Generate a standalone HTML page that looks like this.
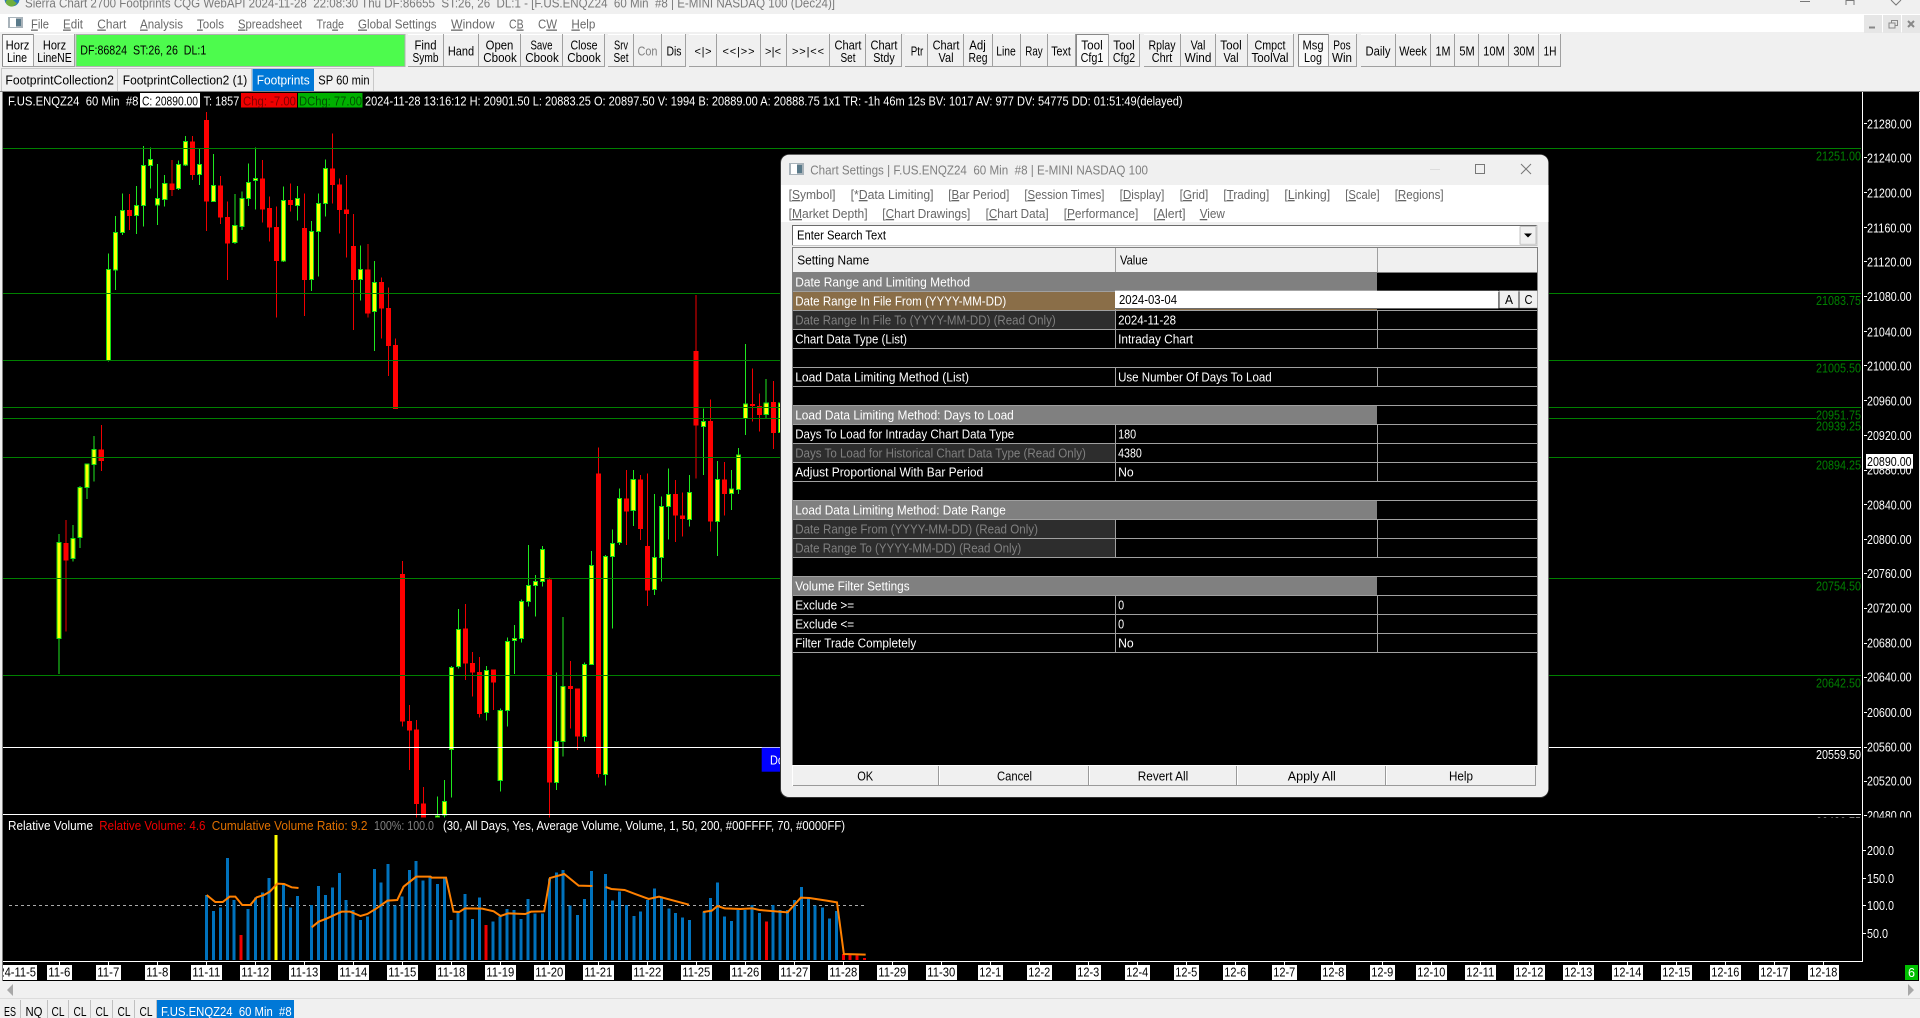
<!DOCTYPE html>
<html><head><meta charset="utf-8"><title>Sierra Chart</title>
<style>
html,body{margin:0;padding:0;background:#f0f0f0;width:1920px;height:1018px;overflow:hidden}
svg{display:block}
text{white-space:pre;font-family:"Liberation Sans",Arial,sans-serif;font-size:13px}
.n{vector-effect:non-scaling-stroke}
.s{font-size:11px}
</style></head><body>
<svg xmlns="http://www.w3.org/2000/svg" width="1920" height="1018" viewBox="0 0 1920 1018">
<defs>
<clipPath id="c1"><rect x="3" y="92" width="1859" height="725.5"/></clipPath>
<clipPath id="c2"><rect x="1864" y="92" width="54" height="725.5"/></clipPath>
<clipPath id="c3"><rect x="3" y="965" width="34" height="15"/></clipPath>
<clipPath id="c4"><rect x="0" y="0" width="1920" height="14"/></clipPath>
<clipPath id="c5"><rect x="1816" y="780" width="46" height="37.5"/></clipPath>
</defs>
<rect width="1920" height="1018" fill="#f0f0f0"/>

<!-- title bar -->
<g clip-path="url(#c4)">
<circle cx="12" cy="-1" r="7.5" fill="#2a78b8"/><path d="M6 1q4 -4 7 -1t4 3q-4 5 -8 3t-3 -5z" fill="#6fae3c"/>
<text x="25" y="7.5" fill="#7a7a7a" textLength="810" lengthAdjust="spacingAndGlyphs">Sierra Chart 2700 Footprints CQG WebAPI 2024-11-28  22:08:30 Thu DF:86655  ST:26, 26  DL:1 - [F.US.ENQZ24  60 Min  #8 | E-MINI NASDAQ 100 (Dec24)]</text>
<path d="M1800 1.5h10M1846 5V.5h8V5M1891 0l5 5 5-5" stroke="#777" fill="none"/>
</g>

<!-- menu -->
<rect x="0" y="14" width="1920" height="18" fill="#fff"/>
<rect x="8" y="17" width="15" height="11" fill="#a9b3ba"/><rect x="10" y="18" width="6" height="9" fill="#fff"/><rect x="16" y="19" width="5" height="7" fill="#5a7a8a"/>
<g fill="#6a6a6a">
<text x="31" y="28.5" textLength="18" lengthAdjust="spacingAndGlyphs"><tspan text-decoration="underline">F</tspan>ile</text>
<text x="63" y="28.5" textLength="20" lengthAdjust="spacingAndGlyphs"><tspan text-decoration="underline">E</tspan>dit</text>
<text x="97.3" y="28.5" textLength="29" lengthAdjust="spacingAndGlyphs"><tspan text-decoration="underline">C</tspan>hart</text>
<text x="140" y="28.5" textLength="43" lengthAdjust="spacingAndGlyphs"><tspan text-decoration="underline">A</tspan>nalysis</text>
<text x="197" y="28.5" textLength="27" lengthAdjust="spacingAndGlyphs"><tspan text-decoration="underline">T</tspan>ools</text>
<text x="238" y="28.5" textLength="64" lengthAdjust="spacingAndGlyphs"><tspan text-decoration="underline">S</tspan>preadsheet</text>
<text x="316.5" y="28.5" textLength="27.5" lengthAdjust="spacingAndGlyphs">Tra<tspan text-decoration="underline">d</tspan>e</text>
<text x="358" y="28.5" textLength="78.6" lengthAdjust="spacingAndGlyphs"><tspan text-decoration="underline">G</tspan>lobal Settings</text>
<text x="451" y="28.5" textLength="43.6" lengthAdjust="spacingAndGlyphs"><tspan text-decoration="underline">W</tspan>indow</text>
<text x="509" y="28.5" textLength="14.6" lengthAdjust="spacingAndGlyphs">C<tspan text-decoration="underline">B</tspan></text>
<text x="538" y="28.5" textLength="19" lengthAdjust="spacingAndGlyphs">C<tspan text-decoration="underline">W</tspan></text>
<text x="571.4" y="28.5" textLength="24" lengthAdjust="spacingAndGlyphs"><tspan text-decoration="underline">H</tspan>elp</text>
</g>
<rect x="1864" y="15" width="18" height="18" fill="#e6e6e6"/><rect x="1883" y="15" width="18" height="18" fill="#e6e6e6"/><rect x="1902" y="15" width="18" height="18" fill="#e6e6e6"/>
<path d="M1869 27.5h6" stroke="#888" stroke-width="2"/>
<path d="M1889 23h6v5h-6zM1891.500 23v-2.500h6v5h-2.500" stroke="#888" fill="none"/>
<path d="M1908 21l6 6m0-6l-6 6" stroke="#888" stroke-width="2"/>

<!-- toolbar -->
<rect x="2" y="34" width="31" height="33" fill="#f9f9f9"/>
<rect x="1076" y="34" width="32" height="33" fill="#f9f9f9"/>
<rect x="1298" y="34" width="30" height="33" fill="#f9f9f9"/>
<rect x="76" y="34.500" width="329" height="32" fill="#4dfb4d" stroke="#b0b0b0"/>
<path d="M2 34.500H74M408 34.500H604M608 34.500H685M689 34.500H901M905 34.500H1139M1144 34.500H1293M1298 34.500H1356M1361 34.500H1560" stroke="#fff"/>
<path d="M2.500 34V67M1076.500 34V67M2 34.500H33M1076 34.500H1108M1298.500 34V67M1298 34.500H1328" stroke="#888"/>
<path d="M2 66.500H74M408 66.500H604M608 66.500H685M689 66.500H901M905 66.500H1139M1144 66.500H1293M1298 66.500H1356M1361 66.500H1560M33.500 34V67M74.500 34V67M443.500 34V67M478.500 34V67M520.500 34V67M562.500 34V67M604.500 34V67M633.500 34V67M661.500 34V67M685.500 34V67M716.500 34V67M760.500 34V67M786.500 34V67M829.500 34V67M865.500 34V67M901.500 34V67M927.500 34V67M963.500 34V67M992.500 34V67M1020.500 34V67M1047.500 34V67M1075.500 34V67M1108.500 34V67M1139.500 34V67M1180.500 34V67M1215.500 34V67M1247.500 34V67M1293.500 34V67M1328.500 34V67M1356.500 34V67M1395.500 34V67M1430.500 34V67M1454.500 34V67M1478.500 34V67M1508.500 34V67M1538.500 34V67M1560.500 34V67" stroke="#a0a0a0" fill="none"/>
<g fill="#000" text-anchor="middle">
<text x="17.500" y="49.500" textLength="23.700" lengthAdjust="spacingAndGlyphs">Horz</text><text x="17" y="62" textLength="20" lengthAdjust="spacingAndGlyphs">Line</text>
<text x="54.500" y="49.500" textLength="23.200" lengthAdjust="spacingAndGlyphs">Horz</text><text x="54.500" y="62" textLength="34.400" lengthAdjust="spacingAndGlyphs">LineNE</text>
<text x="143.300" y="54.500" textLength="126" lengthAdjust="spacingAndGlyphs">DF:86824  ST:26, 26  DL:1</text>
<text x="425.500" y="49.500" textLength="22" lengthAdjust="spacingAndGlyphs">Find</text><text x="425.500" y="62" textLength="26" lengthAdjust="spacingAndGlyphs">Symb</text>
<text x="461" y="55.500" textLength="26.300" lengthAdjust="spacingAndGlyphs">Hand</text>
<text x="499.500" y="49.500" textLength="27.700" lengthAdjust="spacingAndGlyphs">Open</text><text x="500" y="62" textLength="33.500" lengthAdjust="spacingAndGlyphs">Cbook</text>
<text x="541.500" y="49.500" textLength="22" lengthAdjust="spacingAndGlyphs">Save</text><text x="542" y="62" textLength="33.500" lengthAdjust="spacingAndGlyphs">Cbook</text>
<text x="584" y="49.500" textLength="27" lengthAdjust="spacingAndGlyphs">Close</text><text x="584" y="62" textLength="33.500" lengthAdjust="spacingAndGlyphs">Cbook</text>
<text x="621" y="49.500" textLength="14" lengthAdjust="spacingAndGlyphs">Srv</text><text x="621" y="62" textLength="15" lengthAdjust="spacingAndGlyphs">Set</text>
<text x="647.500" y="55.500" textLength="20" lengthAdjust="spacingAndGlyphs" fill="#808080">Con</text>
<text x="674" y="55.500" textLength="15" lengthAdjust="spacingAndGlyphs">Dis</text>
<text class="s" x="703" y="55" textLength="17" lengthAdjust="spacing">&lt;|&gt;</text>
<text class="s" x="738.500" y="55" textLength="32" lengthAdjust="spacing">&lt;&lt;|&gt;&gt;</text>
<text class="s" x="773" y="55" textLength="16" lengthAdjust="spacing">&gt;|&lt;</text>
<text class="s" x="808" y="55" textLength="32" lengthAdjust="spacing">&gt;&gt;|&lt;&lt;</text>
<text x="848" y="49.500" textLength="27" lengthAdjust="spacingAndGlyphs">Chart</text><text x="848" y="62" textLength="15" lengthAdjust="spacingAndGlyphs">Set</text>
<text x="884" y="49.500" textLength="27" lengthAdjust="spacingAndGlyphs">Chart</text><text x="884" y="62" textLength="21.400" lengthAdjust="spacingAndGlyphs">Stdy</text>
<text x="917" y="55.500" textLength="12.500" lengthAdjust="spacingAndGlyphs">Ptr</text>
<text x="946" y="49.500" textLength="26.800" lengthAdjust="spacingAndGlyphs">Chart</text><text x="946" y="62" textLength="15" lengthAdjust="spacingAndGlyphs">Val</text>
<text x="977.500" y="49.500" textLength="16.500" lengthAdjust="spacingAndGlyphs">Adj</text><text x="978" y="62" textLength="19" lengthAdjust="spacingAndGlyphs">Reg</text>
<text x="1006" y="55.500" textLength="19.600" lengthAdjust="spacingAndGlyphs">Line</text>
<text x="1034" y="55.500" textLength="17.400" lengthAdjust="spacingAndGlyphs">Ray</text>
<text x="1061" y="55.500" textLength="19.600" lengthAdjust="spacingAndGlyphs">Text</text>
<text x="1092" y="49.500" textLength="21.400" lengthAdjust="spacingAndGlyphs">Tool</text><text x="1092" y="62" textLength="22.800" lengthAdjust="spacingAndGlyphs">Cfg1</text>
<text x="1124" y="49.500" textLength="21.400" lengthAdjust="spacingAndGlyphs">Tool</text><text x="1124" y="62" textLength="22.300" lengthAdjust="spacingAndGlyphs">Cfg2</text>
<text x="1162" y="49.500" textLength="27" lengthAdjust="spacingAndGlyphs">Rplay</text><text x="1162" y="62" textLength="20.500" lengthAdjust="spacingAndGlyphs">Chrt</text>
<text x="1198" y="49.500" textLength="14.700" lengthAdjust="spacingAndGlyphs">Val</text><text x="1198" y="62" textLength="26.800" lengthAdjust="spacingAndGlyphs">Wind</text>
<text x="1231" y="49.500" textLength="21.400" lengthAdjust="spacingAndGlyphs">Tool</text><text x="1231" y="62" textLength="15" lengthAdjust="spacingAndGlyphs">Val</text>
<text x="1270" y="49.500" textLength="31" lengthAdjust="spacingAndGlyphs">Cmpct</text><text x="1270" y="62" textLength="37" lengthAdjust="spacingAndGlyphs">ToolVal</text>
<text x="1313" y="49.500" textLength="21" lengthAdjust="spacingAndGlyphs">Msg</text><text x="1313" y="62" textLength="18" lengthAdjust="spacingAndGlyphs">Log</text>
<text x="1342" y="49.500" textLength="17.400" lengthAdjust="spacingAndGlyphs">Pos</text><text x="1342" y="62" textLength="20" lengthAdjust="spacingAndGlyphs">Win</text>
<text x="1378" y="55.500" textLength="25" lengthAdjust="spacingAndGlyphs">Daily</text>
<text x="1413" y="55.500" textLength="27.500" lengthAdjust="spacingAndGlyphs">Week</text>
<text x="1443" y="55.500" textLength="15" lengthAdjust="spacingAndGlyphs">1M</text>
<text x="1467" y="55.500" textLength="15.300" lengthAdjust="spacingAndGlyphs">5M</text>
<text x="1494" y="55.500" textLength="21.700" lengthAdjust="spacingAndGlyphs">10M</text>
<text x="1524" y="55.500" textLength="21.300" lengthAdjust="spacingAndGlyphs">30M</text>
<text x="1550" y="55.500" textLength="13" lengthAdjust="spacingAndGlyphs">1H</text>
</g>

<!-- chart tabs -->
<rect x="252.500" y="68" width="61.500" height="23" fill="#0078d7"/>
<path d="M1 68.500H373M1.500 68V91M117.500 68V91M251.500 68V91M373.500 68V91" stroke="#c8c8c8" fill="none"/>
<text x="5.400" y="84.500" fill="#000" textLength="108.500" lengthAdjust="spacingAndGlyphs">FootprintCollection2</text>
<text x="122.800" y="84.500" fill="#000" textLength="124.500" lengthAdjust="spacingAndGlyphs">FootprintCollection2 (1)</text>
<text x="256.700" y="84.500" fill="#fff" textLength="53" lengthAdjust="spacingAndGlyphs">Footprints</text>
<text x="318.300" y="84.500" fill="#000" textLength="51.300" lengthAdjust="spacingAndGlyphs">SP 60 min</text>

<!-- chart background -->
<rect x="0" y="91" width="1920" height="1" fill="#808080"/>
<rect x="3" y="92" width="1916" height="889" fill="#000"/>
<rect x="2" y="92" width="1" height="889" fill="#808080"/>

<!-- candles -->
<g clip-path="url(#c1)">
<g transform="translate(0,90) scale(.50378,.33333)" shape-rendering="crispEdges">
<path class="n" fill="none" stroke="#1fe81f" stroke-width="1" d="M117 1332V1752M145 1305V1415M159 1188V1374M173 1120V1227M187 1038V1175M215 490V815M229 378V600M243 310V435M271 288V432M285 168V410M299 172V295M313 222V405M327 255V350M354 212V300M368 138V228M396 175V285M424 192V335M466 312V462M480 305V420M493 220V348M507 172V358M563 290V516M591 288V392M618 393V603M632 310V560M646 208V380M716 466V632M743 513V783M868 2120V2183M882 2070V2183M896 1728V2123M910 1557V1736M966 1728V1892M993 1855V2105M1007 1642V1910M1021 1605V1752M1035 1528V1658M1049 1365V1550M1063 1455V1580M1077 1368V1490M1105 1748V2100M1118 1581V2000M1160 1718V1955M1174 1383V1725M1202 1395V2087M1216 1318V1616M1230 1195V1365M1257 1140V1308M1299 1212V1515M1313 1220V1475M1327 1135V1348M1369 1155V1310M1396 955V1155M1424 1113V1398M1452 1140V1260M1466 1074V1212M1480 762V1035M1521 867V985M1549 880V1058"/>
<path class="n" fill="none" stroke="#f00000" stroke-width="1" d="M131 1290V1625M201 1005V1143M257 312V420M341 210V318M382 138V270M410 66V423M438 258V402M452 335V570M521 210V398M535 320V455M549 350V683M577 280V365M604 310V678M660 130V340M674 265V430M688 255V503M702 372V720M730 462V683M757 562V745M771 592V858M785 745V957M799 1413V1910M813 1845V2040M827 1890V2183M841 2091V2183M924 1542V1770M938 1686V1820M952 1701V1883M980 1738V1860M1091 1462V2183M1132 1713V1915M1146 1795V1980M1188 1072V2063M1244 1140V1365M1271 1155V1350M1285 1150V1548M1341 1170V1356M1355 1207V1340M1382 615V1165M1410 928V1325M1438 1116V1277M1494 835V995M1508 910V1025M1535 873V1077"/>
<path fill="#ff0000" d="M126 1359h10V1412h-10zM196 1078h10V1113h-10zM252 360h10V378h-10zM336 280h10V300h-10zM377 154h10V255h-10zM405 90h10V335h-10zM433 286h10V383h-10zM447 381h10V461h-10zM516 265h10V358h-10zM530 354h10V413h-10zM544 411h10V513h-10zM572 330h10V345h-10zM599 414h10V570h-10zM655 235h10V285h-10zM669 283h10V360h-10zM683 358h10V372h-10zM697 468h10V570h-10zM725 538h10V670h-10zM752 576h10V656h-10zM766 654h10V768h-10zM780 765h10V957h-10zM794 1452h10V1895h-10zM808 1893h10V1922h-10zM822 1918h10V2142h-10zM836 2140h10V2183h-10zM919 1615h10V1721h-10zM933 1719h10V1748h-10zM947 1746h10V1872h-10zM975 1738h10V1778h-10zM1086 1468h10V2078h-10zM1127 1788h10V1797h-10zM1141 1795h10V1940h-10zM1183 1150h10V2052h-10zM1239 1225h10V1265h-10zM1266 1168h10V1317h-10zM1280 1368h10V1502h-10zM1336 1212h10V1277h-10zM1350 1276h10V1287h-10zM1377 783h10V1007h-10zM1405 993h10V1295h-10zM1433 1168h10V1212h-10zM1489 942h10V948h-10zM1503 948h10V975h-10zM1530 936h10V1029h-10z"/>
<path class="n" fill="#ffff00" stroke="#12e012" stroke-width="1" d="M113 1357h8V1645h-8zM141 1345h8V1406h-8zM155 1192h8V1343h-8zM169 1122h8V1193h-8zM183 1078h8V1124h-8zM211 538h8V812h-8zM225 427h8V540h-8zM239 361h8V428h-8zM267 346h8V376h-8zM281 226h8V347h-8zM295 208h8V227h-8zM309 325h8V345h-8zM323 280h8V328h-8zM350 223h8V296h-8zM364 154h8V225h-8zM392 223h8V254h-8zM420 286h8V335h-8zM462 406h8V458h-8zM476 325h8V410h-8zM489 277h8V325h-8zM503 265h8V272h-8zM559 331h8V513h-8zM587 325h8V347h-8zM614 424h8V569h-8zM628 340h8V425h-8zM642 235h8V340h-8zM712 538h8V569h-8zM739 577h8V665h-8zM864 2178h8V2183h-8zM878 2134h8V2175h-8zM892 1732h8V1978h-8zM906 1618h8V1730h-8zM962 1741h8V1868h-8zM989 1861h8V2072h-8zM1003 1654h8V1862h-8zM1017 1645h8V1652h-8zM1031 1534h8V1646h-8zM1045 1486h8V1535h-8zM1059 1474h8V1487h-8zM1073 1378h8V1474h-8zM1101 1954h8V2078h-8zM1114 1789h8V1955h-8zM1156 1723h8V1940h-8zM1170 1426h8V1724h-8zM1198 1399h8V2054h-8zM1212 1360h8V1400h-8zM1226 1225h8V1358h-8zM1253 1168h8V1262h-8zM1295 1402h8V1499h-8zM1309 1249h8V1403h-8zM1323 1213h8V1250h-8zM1365 1207h8V1289h-8zM1392 995h8V1010h-8zM1420 1168h8V1295h-8zM1448 1197h8V1211h-8zM1462 1095h8V1199h-8zM1476 942h8V985h-8zM1517 939h8V974h-8zM1545 939h8V1028h-8z"/>
</g>
<!-- horizontal lines -->
<g fill="#008000" shape-rendering="crispEdges">
<rect x="3" y="148" width="1858" height="1"/><rect x="3" y="293" width="1858" height="1"/><rect x="3" y="360" width="1858" height="1"/><rect x="3" y="407" width="1858" height="1"/><rect x="3" y="418" width="1813" height="1"/><rect x="3" y="457" width="1858" height="1"/><rect x="3" y="578" width="1858" height="1"/><rect x="3" y="675" width="1858" height="1"/>
</g>
<rect x="3" y="747" width="1858" height="1" fill="#fff"/><rect x="3" y="814" width="1858" height="1" fill="#fff"/>
<g fill="#008000" text-anchor="end">
<text x="1861" y="160.300" textLength="45" lengthAdjust="spacingAndGlyphs">21251.00</text>
<text x="1861" y="305" textLength="45" lengthAdjust="spacingAndGlyphs">21083.75</text>
<text x="1861" y="372.300" textLength="45" lengthAdjust="spacingAndGlyphs">21005.50</text>
<text x="1861" y="430.600" textLength="45" lengthAdjust="spacingAndGlyphs">20939.25</text>
</g>
<rect x="1816" y="408" width="45" height="13" fill="#000"/>
<g fill="#008000" text-anchor="end">
<text x="1861" y="419.600" textLength="45" lengthAdjust="spacingAndGlyphs">20951.75</text>
<text x="1861" y="469.600" textLength="45" lengthAdjust="spacingAndGlyphs">20894.25</text>
<text x="1861" y="590.300" textLength="45" lengthAdjust="spacingAndGlyphs">20754.50</text>
<text x="1861" y="687.300" textLength="45" lengthAdjust="spacingAndGlyphs">20642.50</text>
</g>
<text x="1861" y="759" fill="#fff" text-anchor="end" textLength="45" lengthAdjust="spacingAndGlyphs">20559.50</text>
<g clip-path="url(#c5)"><text x="1861" y="826" fill="#fff" text-anchor="end" textLength="45" lengthAdjust="spacingAndGlyphs">20480.75</text></g>
</g>

<!-- info line -->
<text x="8" y="105.500" fill="#fff" textLength="130.400" lengthAdjust="spacingAndGlyphs">F.US.ENQZ24  60 Min  #8</text>
<rect x="140" y="93" width="60" height="14.500" fill="#fff"/>
<text x="142" y="105.500" fill="#000" textLength="56" lengthAdjust="spacingAndGlyphs">C: 20890.00</text>
<text x="203.600" y="105.500" fill="#fff" textLength="35.700" lengthAdjust="spacingAndGlyphs">T: 1857</text>
<rect x="241" y="93" width="56" height="14.500" fill="#f00000"/>
<text x="243" y="105.500" fill="#800000" textLength="53" lengthAdjust="spacingAndGlyphs">Chg: -7.00</text>
<rect x="298" y="93" width="64.500" height="14.500" fill="#00b000"/>
<text x="299" y="105.500" fill="#005000" textLength="63" lengthAdjust="spacingAndGlyphs">DChg: 77.00</text>
<text x="365" y="105.500" fill="#fff" textLength="817.600" lengthAdjust="spacingAndGlyphs">2024-11-28 13:16:12 H: 20901.50 L: 20883.25 O: 20897.50 V: 1994 B: 20889.00 A: 20888.75 1x1 TR: -1h 46m 12s BV: 1017 AV: 977 DV: 54775 DD: 01:51:49(delayed)</text>

<!-- price scale -->
<rect x="1862" y="92" width="1" height="869" fill="#fff"/>
<g clip-path="url(#c2)">
<path d="M1864 123.500h3M1864 157.500h3M1864 192.500h3M1864 227.500h3M1864 261.500h3M1864 296.500h3M1864 331.500h3M1864 365.500h3M1864 400.500h3M1864 435.500h3M1864 470.500h3M1864 504.500h3M1864 539.500h3M1864 573.500h3M1864 608.500h3M1864 643.500h3M1864 677.500h3M1864 712.500h3M1864 747.500h3M1864 781.500h3M1864 815.500h3" stroke="#fff"/>
<g fill="#fff">
<text x="1867" y="128.300" textLength="44.600" lengthAdjust="spacingAndGlyphs">21280.00</text>
<text x="1867" y="162.300" textLength="44.600" lengthAdjust="spacingAndGlyphs">21240.00</text>
<text x="1867" y="197.300" textLength="44.600" lengthAdjust="spacingAndGlyphs">21200.00</text>
<text x="1867" y="232.300" textLength="44.600" lengthAdjust="spacingAndGlyphs">21160.00</text>
<text x="1867" y="266.300" textLength="44.600" lengthAdjust="spacingAndGlyphs">21120.00</text>
<text x="1867" y="301" textLength="44.600" lengthAdjust="spacingAndGlyphs">21080.00</text>
<text x="1867" y="336.300" textLength="44.600" lengthAdjust="spacingAndGlyphs">21040.00</text>
<text x="1867" y="370.300" textLength="44.600" lengthAdjust="spacingAndGlyphs">21000.00</text>
<text x="1867" y="405.300" textLength="44.600" lengthAdjust="spacingAndGlyphs">20960.00</text>
<text x="1867" y="440" textLength="44.600" lengthAdjust="spacingAndGlyphs">20920.00</text>
<text x="1867" y="474.600" textLength="44.600" lengthAdjust="spacingAndGlyphs">20880.00</text>
<text x="1867" y="509.300" textLength="44.600" lengthAdjust="spacingAndGlyphs">20840.00</text>
<text x="1867" y="544" textLength="44.600" lengthAdjust="spacingAndGlyphs">20800.00</text>
<text x="1867" y="578" textLength="44.600" lengthAdjust="spacingAndGlyphs">20760.00</text>
<text x="1867" y="612.600" textLength="44.600" lengthAdjust="spacingAndGlyphs">20720.00</text>
<text x="1867" y="647.600" textLength="44.600" lengthAdjust="spacingAndGlyphs">20680.00</text>
<text x="1867" y="681.600" textLength="44.600" lengthAdjust="spacingAndGlyphs">20640.00</text>
<text x="1867" y="717" textLength="44.600" lengthAdjust="spacingAndGlyphs">20600.00</text>
<text x="1867" y="751.600" textLength="44.600" lengthAdjust="spacingAndGlyphs">20560.00</text>
<text x="1867" y="785.600" textLength="44.600" lengthAdjust="spacingAndGlyphs">20520.00</text>
<text x="1867" y="820" textLength="44.600" lengthAdjust="spacingAndGlyphs">20480.00</text>
</g>
</g>
<rect x="1866" y="454" width="47" height="14.700" fill="#fff"/>
<text x="1867" y="466" fill="#000" textLength="44.600" lengthAdjust="spacingAndGlyphs">20890.00</text>

<!-- region 2 -->
<text x="8" y="830" fill="#fff" textLength="85" lengthAdjust="spacingAndGlyphs">Relative Volume</text>
<text x="99.300" y="830" fill="#f00000" textLength="106.200" lengthAdjust="spacingAndGlyphs">Relative Volume: 4.6</text>
<text x="211.800" y="830" fill="#e07000" textLength="155.600" lengthAdjust="spacingAndGlyphs">Cumulative Volume Ratio: 9.2</text>
<text x="374" y="830" fill="#808080" textLength="60" lengthAdjust="spacingAndGlyphs">100%: 100.0</text>
<text x="443" y="830" fill="#fff" textLength="402" lengthAdjust="spacingAndGlyphs">(30, All Days, Yes, Average Volume, Volume, 1, 50, 200, #00FFFF, 70, #0000FF)</text>
<path d="M9 905.500H866" stroke="#aaa" stroke-dasharray="3 3"/>
<g transform="translate(0,810) scale(.57405,.33333)" shape-rendering="crispEdges">
<path class="n" fill="none" stroke="#0072bd" stroke-width="3" d="M360 255V450M372 303V450M384 293V450M396 144V450M408 270V450M432 297V450M445 262V450M457 247V450M469 204V450M494 223V450M506 293V450M518 258V450M543 285V450M555 228V450M567 255V450M579 232V450M591 189V450M603 270V450M615 300V450M628 330V450M640 320V450M652 177V450M664 218V450M676 162V450M688 287V450M700 260V450M713 180V450M725 153V450M737 212V450M749 200V450M762 222V450M774 205V450M786 330V450M798 305V450M810 252V450M823 327V450M835 262V450M859 335V450M871 320V450M883 297V450M895 300V450M908 327V450M920 267V450M932 310V450M945 310V450M957 205V450M969 187V450M981 180V450M993 287V450M1006 315V450M1018 267V450M1030 183V450M1055 192V450M1067 272V450M1079 245V450M1091 285V450M1104 318V450M1116 305V450M1128 270V450M1140 235V450M1152 260V450M1165 295V450M1177 309V450M1189 323V450M1201 330V450M1226 305V450M1238 264V450M1250 218V450M1262 320V450M1274 333V450M1286 300V450M1298 300V450M1310 285V450M1323 309V450M1347 285V450M1359 300V450M1372 300V450M1384 270V450M1396 231V450M1408 262V450M1420 287V450M1433 293V450M1445 325V450M1457 303V450"/>
<path class="n" fill="none" stroke="#f00000" stroke-width="3" d="M420 375V450M847 345V450M1335 335V450M1469 432V450M1481 435V450M1493 437V450M1506 444V450"/>
<path class="n" fill="none" stroke="#ffff00" stroke-width="3" d="M481 75V450"/>
</g>
<g transform="translate(0,810) scale(.57405,.33333)">
<path class="n" fill="none" stroke="#ff8000" stroke-width="2" d="M360 255L375 276H388L400 260H410L422 285H436L447 262L460 255L470 245L483 221L495 222L508 232L520 234M543 352L555 335L570 325L595 305H610L628 318L640 312L655 296L675 272L692 270L703 230L725 200H750L752 203H777L790 305L800 306L810 295L840 296L860 304L872 318L885 310L915 312L925 305L948 304L958 204L983 192L1008 227L1032 228M1055 231L1065 237L1088 240L1130 267L1148 260L1200 284M1225 306L1240 302L1250 288L1262 295L1290 297L1310 295L1323 300L1372 307L1395 263L1410 264L1440 272L1458 277L1470 432L1508 434"/>
</g>
<path d="M1863 850.500h3M1863 878.500h3M1863 905.500h3M1863 933.500h3" stroke="#fff"/>
<g fill="#fff">
<text x="1867" y="855" textLength="27" lengthAdjust="spacingAndGlyphs">200.0</text>
<text x="1867" y="883" textLength="27" lengthAdjust="spacingAndGlyphs">150.0</text>
<text x="1867" y="910" textLength="27" lengthAdjust="spacingAndGlyphs">100.0</text>
<text x="1867" y="938" textLength="21" lengthAdjust="spacingAndGlyphs">50.0</text>
</g>
<rect x="3" y="961" width="1860" height="1" fill="#fff"/>

<!-- date labels -->
<path stroke="#fff" d="M59.500 962v3M108.500 962v3M157.500 962v3M206.500 962v3M255.500 962v3M304.500 962v3M353.500 962v3M402.500 962v3M451.500 962v3M500.500 962v3M549.500 962v3M598.500 962v3M647.500 962v3M696.500 962v3M745.500 962v3M794.500 962v3M843.500 962v3M892.500 962v3M941.500 962v3M990.500 962v3M1039.500 962v3M1088.500 962v3M1137.500 962v3M1186.500 962v3M1235.500 962v3M1284.500 962v3M1333.500 962v3M1382.500 962v3M1431.500 962v3M1480.500 962v3M1529.500 962v3M1578.500 962v3M1627.500 962v3M1676.500 962v3M1725.500 962v3M1774.500 962v3M1823.500 962v3"/>
<path fill="#fff" d="M3 965h34v15H3zM47 965h25v15H47zM96 965h25v15H96zM145 965h25v15h-25zM191 965h31v15h-31zM240 965h31v15h-31zM289 965h31v15h-31zM338 965h31v15h-31zM387 965h31v15h-31zM436 965h31v15h-31zM485 965h31v15h-31zM534 965h31v15h-31zM583 965h31v15h-31zM632 965h31v15h-31zM681 965h31v15h-31zM730 965h31v15h-31zM779 965h31v15h-31zM828 965h31v15h-31zM877 965h31v15h-31zM926 965h31v15h-31zM978 965h25v15h-25zM1027 965h25v15h-25zM1076 965h25v15h-25zM1125 965h25v15h-25zM1174 965h25v15h-25zM1223 965h25v15h-25zM1272 965h25v15h-25zM1321 965h25v15h-25zM1370 965h25v15h-25zM1416 965h31v15h-31zM1465 965h31v15h-31zM1514 965h31v15h-31zM1563 965h31v15h-31zM1612 965h31v15h-31zM1661 965h31v15h-31zM1710 965h31v15h-31zM1759 965h31v15h-31zM1808 965h31v15h-31z"/>
<g fill="#000" text-anchor="middle">
<g clip-path="url(#c3)"><text x="11" y="976.700" textLength="50" lengthAdjust="spacingAndGlyphs">2024-11-5</text></g>
<text x="59.300" y="976.700" textLength="22" lengthAdjust="spacingAndGlyphs">11-6</text>
<text x="108.300" y="976.700" textLength="22" lengthAdjust="spacingAndGlyphs">11-7</text>
<text x="157.300" y="976.700" textLength="22" lengthAdjust="spacingAndGlyphs">11-8</text>
<text x="206.300" y="976.700" textLength="28" lengthAdjust="spacingAndGlyphs">11-11</text>
<text x="255.300" y="976.700" textLength="28" lengthAdjust="spacingAndGlyphs">11-12</text>
<text x="304.300" y="976.700" textLength="28" lengthAdjust="spacingAndGlyphs">11-13</text>
<text x="353.300" y="976.700" textLength="28" lengthAdjust="spacingAndGlyphs">11-14</text>
<text x="402.300" y="976.700" textLength="28" lengthAdjust="spacingAndGlyphs">11-15</text>
<text x="451.300" y="976.700" textLength="28" lengthAdjust="spacingAndGlyphs">11-18</text>
<text x="500.300" y="976.700" textLength="28" lengthAdjust="spacingAndGlyphs">11-19</text>
<text x="549.300" y="976.700" textLength="28" lengthAdjust="spacingAndGlyphs">11-20</text>
<text x="598.300" y="976.700" textLength="28" lengthAdjust="spacingAndGlyphs">11-21</text>
<text x="647.300" y="976.700" textLength="28" lengthAdjust="spacingAndGlyphs">11-22</text>
<text x="696.300" y="976.700" textLength="28" lengthAdjust="spacingAndGlyphs">11-25</text>
<text x="745.300" y="976.700" textLength="28" lengthAdjust="spacingAndGlyphs">11-26</text>
<text x="794.300" y="976.700" textLength="28" lengthAdjust="spacingAndGlyphs">11-27</text>
<text x="843.300" y="976.700" textLength="28" lengthAdjust="spacingAndGlyphs">11-28</text>
<text x="892.300" y="976.700" textLength="28" lengthAdjust="spacingAndGlyphs">11-29</text>
<text x="941.300" y="976.700" textLength="28" lengthAdjust="spacingAndGlyphs">11-30</text>
<text x="990.300" y="976.700" textLength="22" lengthAdjust="spacingAndGlyphs">12-1</text>
<text x="1039.300" y="976.700" textLength="22" lengthAdjust="spacingAndGlyphs">12-2</text>
<text x="1088.300" y="976.700" textLength="22" lengthAdjust="spacingAndGlyphs">12-3</text>
<text x="1137.300" y="976.700" textLength="22" lengthAdjust="spacingAndGlyphs">12-4</text>
<text x="1186.300" y="976.700" textLength="22" lengthAdjust="spacingAndGlyphs">12-5</text>
<text x="1235.300" y="976.700" textLength="22" lengthAdjust="spacingAndGlyphs">12-6</text>
<text x="1284.300" y="976.700" textLength="22" lengthAdjust="spacingAndGlyphs">12-7</text>
<text x="1333.300" y="976.700" textLength="22" lengthAdjust="spacingAndGlyphs">12-8</text>
<text x="1382.300" y="976.700" textLength="22" lengthAdjust="spacingAndGlyphs">12-9</text>
<text x="1431.300" y="976.700" textLength="28" lengthAdjust="spacingAndGlyphs">12-10</text>
<text x="1480.300" y="976.700" textLength="28" lengthAdjust="spacingAndGlyphs">12-11</text>
<text x="1529.300" y="976.700" textLength="28" lengthAdjust="spacingAndGlyphs">12-12</text>
<text x="1578.300" y="976.700" textLength="28" lengthAdjust="spacingAndGlyphs">12-13</text>
<text x="1627.300" y="976.700" textLength="28" lengthAdjust="spacingAndGlyphs">12-14</text>
<text x="1676.300" y="976.700" textLength="28" lengthAdjust="spacingAndGlyphs">12-15</text>
<text x="1725.300" y="976.700" textLength="28" lengthAdjust="spacingAndGlyphs">12-16</text>
<text x="1774.300" y="976.700" textLength="28" lengthAdjust="spacingAndGlyphs">12-17</text>
<text x="1823.300" y="976.700" textLength="28" lengthAdjust="spacingAndGlyphs">12-18</text>
</g>
<rect x="1905" y="965" width="13" height="15" fill="#00c000"/>
<text x="1911.500" y="977" fill="#fff" text-anchor="middle" textLength="7" lengthAdjust="spacingAndGlyphs">6</text>

<!-- scrollbar + bottom tabs -->
<rect x="0" y="981" width="1920" height="37" fill="#f0f0f0"/>
<rect x="0" y="998" width="1920" height="1" fill="#dcdcdc"/>
<path d="M7 990l6-6v12zM1914 990l-6-6v12z" fill="#a8a8a8"/>
<rect x="156.700" y="1000" width="137.300" height="18" fill="#0078d7"/>
<path d="M20.500 1000v18M47.500 1000v18M68.500 1000v18M90.500 1000v18M112.500 1000v18M134.500 1000v18M156.500 1000v18" stroke="#c0c0c0"/>
<g fill="#000" text-anchor="middle">
<text x="10" y="1016" textLength="12" lengthAdjust="spacingAndGlyphs">ES</text>
<text x="34" y="1016" textLength="17" lengthAdjust="spacingAndGlyphs">NQ</text>
<text x="58" y="1016" textLength="13" lengthAdjust="spacingAndGlyphs">CL</text>
<text x="80" y="1016" textLength="13" lengthAdjust="spacingAndGlyphs">CL</text>
<text x="102" y="1016" textLength="13" lengthAdjust="spacingAndGlyphs">CL</text>
<text x="124" y="1016" textLength="13" lengthAdjust="spacingAndGlyphs">CL</text>
<text x="146" y="1016" textLength="13" lengthAdjust="spacingAndGlyphs">CL</text>
</g>
<text x="161" y="1016" fill="#fff" textLength="130.600" lengthAdjust="spacingAndGlyphs">F.US.ENQZ24  60 Min  #8</text>

<!-- blue label behind dialog -->
<rect x="761.700" y="747.700" width="20" height="24" fill="#0000ff"/>
<text x="770" y="764.500" fill="#fff" textLength="14" lengthAdjust="spacingAndGlyphs">Do</text>

<!-- dialog -->
<rect x="780" y="154" width="769" height="644" rx="9" fill="#333"/>
<rect x="781" y="154.700" width="767.300" height="642.300" rx="8" fill="#f0f0f0"/>
<rect x="789" y="163" width="15" height="12" fill="#a9b3ba"/><rect x="791" y="164" width="6" height="10" fill="#fff"/><rect x="797" y="165" width="5" height="8" fill="#5a7a8a"/>
<text x="810.300" y="174.500" fill="#7f7f7f" textLength="337.700" lengthAdjust="spacingAndGlyphs">Chart Settings | F.US.ENQZ24  60 Min  #8 | E-MINI NASDAQ 100</text>
<path d="M1430 169.500h10" stroke="#dcdcdc"/>
<rect x="1475.500" y="164.500" width="9" height="9" fill="none" stroke="#777"/>
<path d="M1521 164l10 10m0-10l-10 10" stroke="#777" fill="none"/>
<rect x="781" y="185" width="767.300" height="37" fill="#fff"/>
<g fill="#666">
<text x="788.600" y="199" textLength="46.900" lengthAdjust="spacingAndGlyphs">[<tspan text-decoration="underline">S</tspan>ymbol]</text>
<text x="850.600" y="199" textLength="83" lengthAdjust="spacingAndGlyphs">[*<tspan text-decoration="underline">D</tspan>ata Limiting]</text>
<text x="948.300" y="199" textLength="61" lengthAdjust="spacingAndGlyphs">[<tspan text-decoration="underline">B</tspan>ar Period]</text>
<text x="1024.400" y="199" textLength="80" lengthAdjust="spacingAndGlyphs">[<tspan text-decoration="underline">S</tspan>ession Times]</text>
<text x="1119.600" y="199" textLength="44.800" lengthAdjust="spacingAndGlyphs">[<tspan text-decoration="underline">D</tspan>isplay]</text>
<text x="1179.600" y="199" textLength="28.700" lengthAdjust="spacingAndGlyphs">[<tspan text-decoration="underline">G</tspan>rid]</text>
<text x="1223.400" y="199" textLength="45.800" lengthAdjust="spacingAndGlyphs">[<tspan text-decoration="underline">T</tspan>rading]</text>
<text x="1284.400" y="199" textLength="45.800" lengthAdjust="spacingAndGlyphs">[<tspan text-decoration="underline">L</tspan>inking]</text>
<text x="1345.300" y="199" textLength="34.300" lengthAdjust="spacingAndGlyphs">[<tspan text-decoration="underline">S</tspan>cale]</text>
<text x="1394.700" y="199" textLength="48.900" lengthAdjust="spacingAndGlyphs">[<tspan text-decoration="underline">R</tspan>egions]</text>
<text x="788.600" y="218" textLength="79" lengthAdjust="spacingAndGlyphs">[<tspan text-decoration="underline">M</tspan>arket Depth]</text>
<text x="882.300" y="218" textLength="88" lengthAdjust="spacingAndGlyphs">[<tspan text-decoration="underline">C</tspan>hart Drawings]</text>
<text x="985.600" y="218" textLength="63" lengthAdjust="spacingAndGlyphs">[<tspan text-decoration="underline">C</tspan>hart Data]</text>
<text x="1063.700" y="218" textLength="74.600" lengthAdjust="spacingAndGlyphs">[<tspan text-decoration="underline">P</tspan>erformance]</text>
<text x="1153.400" y="218" textLength="32.200" lengthAdjust="spacingAndGlyphs">[<tspan text-decoration="underline">A</tspan>lert]</text>
<text x="1199.700" y="218" textLength="25.200" lengthAdjust="spacingAndGlyphs"><tspan text-decoration="underline">V</tspan>iew</text>
</g>
<!-- search combo -->
<rect x="792" y="225" width="745" height="21" fill="#fff"/>
<path d="M792.500 246V225.500H1537" stroke="#6b6b6b" fill="none"/>
<path d="M792 245.500H1537V225" stroke="#c8c8c8" fill="none"/>
<text x="797" y="239.500" fill="#000" textLength="89" lengthAdjust="spacingAndGlyphs">Enter Search Text</text>
<rect x="1520" y="226.700" width="16" height="17.500" fill="#f0f0f0" stroke="#a0a0a0" stroke-width=".6"/>
<path d="M1524 233.500h8l-4 4z" fill="#000"/>
<!-- table -->
<rect x="792" y="247" width="746" height="518" fill="#000"/>
<rect x="792.500" y="247.500" width="745" height="25" fill="#f0f0f0" stroke="#808080"/>
<path d="M1115.500 248v24M1377.500 248v24" stroke="#a0a0a0"/>
<text x="797.200" y="264.500" fill="#000" textLength="72" lengthAdjust="spacingAndGlyphs">Setting Name</text>
<text x="1120" y="264.500" fill="#000" textLength="27.700" lengthAdjust="spacingAndGlyphs">Value</text>
<g fill="#808080"><rect x="792" y="273" width="585" height="18"/><rect x="792" y="406" width="585" height="18"/><rect x="792" y="501" width="585" height="18"/><rect x="792" y="577" width="585" height="18"/></g>
<rect x="792" y="292" width="585" height="18" fill="#8a6e48"/>
<g fill="#2d2d2d"><rect x="792" y="311" width="323" height="18"/><rect x="792" y="444" width="323" height="18"/><rect x="792" y="520" width="323" height="18"/><rect x="792" y="539" width="323" height="18"/></g>
<path d="M792 291.500H1538M792 310.500H1538M792 329.500H1538M792 348.500H1538M792 367.500H1538M792 386.500H1538M792 405.500H1538M792 424.500H1538M792 443.500H1538M792 462.500H1538M792 481.500H1538M792 500.500H1538M792 519.500H1538M792 538.500H1538M792 557.500H1538M792 576.500H1538M792 595.500H1538M792 614.500H1538M792 633.500H1538M792 652.500H1538" stroke="#a0a0a0"/>
<path d="M1115.500 291V348M1115.500 367V386M1115.500 424V481M1115.500 519V557M1115.500 595V652M1377.500 310V348M1377.500 367V386M1377.500 424V481M1377.500 519V557M1377.500 595V652" stroke="#a0a0a0"/>
<path d="M792.500 247V765M1537.500 247V765" stroke="#808080"/>
<g fill="#fff">
<text x="795.200" y="286.700" textLength="174.800" lengthAdjust="spacingAndGlyphs">Date Range and Limiting Method</text>
<text x="795.200" y="305.700" textLength="211" lengthAdjust="spacingAndGlyphs">Date Range In File From (YYYY-MM-DD)</text>
<text x="795.200" y="343.700" textLength="111.800" lengthAdjust="spacingAndGlyphs">Chart Data Type (List)</text>
<text x="795.200" y="381.700" textLength="173.800" lengthAdjust="spacingAndGlyphs">Load Data Limiting Method (List)</text>
<text x="795.200" y="419.700" textLength="218.600" lengthAdjust="spacingAndGlyphs">Load Data Limiting Method: Days to Load</text>
<text x="795.200" y="438.700" textLength="219" lengthAdjust="spacingAndGlyphs">Days To Load for Intraday Chart Data Type</text>
<text x="795.200" y="476.700" textLength="188" lengthAdjust="spacingAndGlyphs">Adjust Proportional With Bar Period</text>
<text x="795.200" y="514.700" textLength="210.600" lengthAdjust="spacingAndGlyphs">Load Data Limiting Method: Date Range</text>
<text x="795.200" y="590.700" textLength="114.400" lengthAdjust="spacingAndGlyphs">Volume Filter Settings</text>
<text x="795.200" y="609.700" textLength="59" lengthAdjust="spacingAndGlyphs">Exclude &gt;=</text>
<text x="795.200" y="628.700" textLength="59" lengthAdjust="spacingAndGlyphs">Exclude &lt;=</text>
<text x="795.200" y="647.700" textLength="121" lengthAdjust="spacingAndGlyphs">Filter Trade Completely</text>
<text x="1118.100" y="324.700" textLength="58" lengthAdjust="spacingAndGlyphs">2024-11-28</text>
<text x="1118.100" y="343.700" textLength="75" lengthAdjust="spacingAndGlyphs">Intraday Chart</text>
<text x="1118.100" y="381.700" textLength="153.600" lengthAdjust="spacingAndGlyphs">Use Number Of Days To Load</text>
<text x="1118.100" y="438.700" textLength="18" lengthAdjust="spacingAndGlyphs">180</text>
<text x="1118.100" y="457.700" textLength="23.700" lengthAdjust="spacingAndGlyphs">4380</text>
<text x="1118.100" y="476.700" textLength="15.600" lengthAdjust="spacingAndGlyphs">No</text>
<text x="1118.100" y="609.700" textLength="6" lengthAdjust="spacingAndGlyphs">0</text>
<text x="1118.100" y="628.700" textLength="6" lengthAdjust="spacingAndGlyphs">0</text>
<text x="1118.100" y="647.700" textLength="15.600" lengthAdjust="spacingAndGlyphs">No</text>
</g>
<g fill="#808080">
<text x="795.200" y="324.700" textLength="260.500" lengthAdjust="spacingAndGlyphs">Date Range In File To (YYYY-MM-DD) (Read Only)</text>
<text x="795.200" y="457.700" textLength="290.700" lengthAdjust="spacingAndGlyphs">Days To Load for Historical Chart Data Type (Read Only)</text>
<text x="795.200" y="533.700" textLength="242.800" lengthAdjust="spacingAndGlyphs">Date Range From (YYYY-MM-DD) (Read Only)</text>
<text x="795.200" y="552.700" textLength="226" lengthAdjust="spacingAndGlyphs">Date Range To (YYYY-MM-DD) (Read Only)</text>
</g>
<!-- edit field -->
<rect x="1115" y="290.700" width="383.500" height="17.300" fill="#fff"/>
<path d="M1115 308.500H1498.500" stroke="#6b6b6b"/>
<text x="1119" y="304" fill="#000" textLength="58" lengthAdjust="spacingAndGlyphs">2024-03-04</text>
<rect x="1499.500" y="290.700" width="19" height="17.300" fill="#f0f0f0" stroke="#a0a0a0" stroke-width=".6"/>
<rect x="1519.500" y="290.700" width="18" height="17.300" fill="#f0f0f0" stroke="#a0a0a0" stroke-width=".6"/>
<text x="1509" y="304" fill="#000" text-anchor="middle" textLength="8" lengthAdjust="spacingAndGlyphs">A</text>
<text x="1528.500" y="304" fill="#000" text-anchor="middle" textLength="8" lengthAdjust="spacingAndGlyphs">C</text>
<!-- buttons -->
<rect x="792" y="765" width="743.500" height="21" fill="#f0f0f0"/>
<path d="M792 785.500H1535.500M938.500 765V786M1088.500 765V786M1236.500 765V786M1385.500 765V786M1535.500 765V786" stroke="#9a9a9a" fill="none"/>
<path d="M792 765.500H1536M792.500 765V786M939.500 766V785M1089.500 766V785M1237.500 766V785M1386.500 766V785" stroke="#fff" fill="none"/>
<g fill="#000" text-anchor="middle">
<text x="865.200" y="780.700" textLength="16" lengthAdjust="spacingAndGlyphs">OK</text>
<text x="1014.500" y="780.700" textLength="35" lengthAdjust="spacingAndGlyphs">Cancel</text>
<text x="1163" y="780.700" textLength="50.400" lengthAdjust="spacingAndGlyphs">Revert All</text>
<text x="1311.800" y="780.700" textLength="48" lengthAdjust="spacingAndGlyphs">Apply All</text>
<text x="1461" y="780.700" textLength="24" lengthAdjust="spacingAndGlyphs">Help</text>
</g>
</svg>
</body></html>
